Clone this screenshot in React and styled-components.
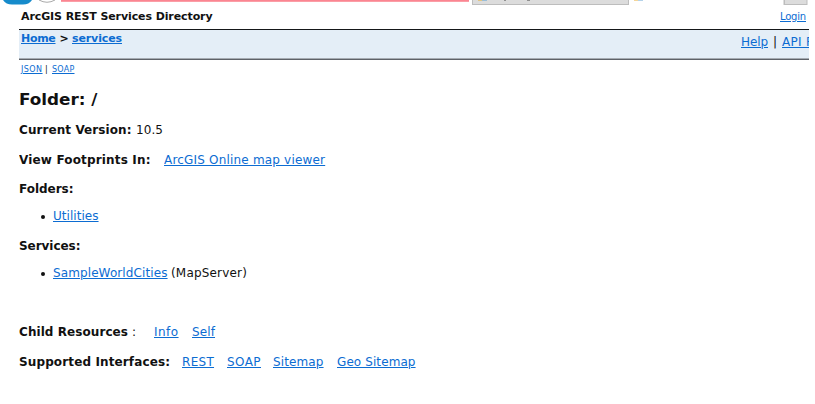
import React from 'react';
import styled, { createGlobalStyle, css } from 'styled-components';

const Global = createGlobalStyle`
  body { margin: 0; background: #fff; overflow: hidden; }
`;

const Page = styled.div`
  box-sizing: border-box;
  width: 815px;
  height: 404px;
  overflow: hidden;
  padding-right: 6px;
  font-family: "DejaVu Sans", Verdana, sans-serif;
  font-size: 11.5px;
  color: #111;
`;

const BrowserEdge = styled.svg`
  display: block;
  width: 815px;
  height: 6px;
`;

const TitleBar = styled.header`
  display: flex;
  justify-content: space-between;
  height: 23px;
  margin-left: 19px;
  padding: 0 3px 0 2px;
  border-bottom: 1px solid #151719;
  line-height: 22px;
`;

const NavBar = styled.nav`
  display: flex;
  justify-content: space-between;
  height: 29px;
  margin-left: 19px;
  padding-left: 2px;
  overflow: hidden;
  background: #e4eef7;
  border-bottom: 1px solid #5e6268;
  box-shadow: inset 0 -1px #a5abb2;
`;

const Crumbs = styled.div`
  display: flex;
  line-height: 17px;
`;

const HelpLinks = styled.div`
  display: flex;
  width: 68px;
  overflow: hidden;
  line-height: 24px;
`;

const Formats = styled.div`
  display: flex;
  height: 20px;
  padding-left: 21px;
  line-height: 20px;
`;

const Row = styled.div`
  display: flex;
  height: 20px;
  margin-top: ${(p) => p.$top}px;
  padding-left: 19px;
  line-height: 20px;
`;

const Item = styled(Row)`
  padding-left: 41px;
`;

const Bullet = styled.span`
  flex: none;
  width: 4px;
  height: 4px;
  margin: 9px 0 0 -0.5px;
  border-radius: 50%;
  background: #111;
`;

const WIDEN = 12 / 11.5;

// Body text is set wide: the glyphs are stretched, the box keeps its $w.
const widened = css`
  width: ${(p) => p.$w / WIDEN}px;
  margin-right: ${(p) => p.$w - p.$w / WIDEN}px;
  transform: scaleX(${WIDEN});
  transform-origin: 0 50%;
`;

const Text = styled.span`
  flex: none;
  width: ${(p) => p.$w}px;
  margin-left: ${(p) => p.$gap || 0}px;
  font-size: ${(p) => p.$size || 11.5}px;
  font-weight: ${(p) => (p.$bold ? 700 : 400)};
  letter-spacing: ${(p) => p.$track || 0}px;
  white-space: nowrap;
  ${(p) => !p.$size && widened}
`;

const Heading = styled.h1`
  margin: 0;
  font-size: 16px;
  font-weight: 700;
  transform: scaleX(1.05);
  transform-origin: 0 50%;
`;

const TextLink = styled(Text).attrs({ as: 'a', href: '#' })`
  height: max-content;
  color: #0c6cd2;
  text-decoration: underline;
  text-decoration-thickness: 1px;
  text-underline-offset: 1px;
`;

export default function App() {
  return (
    <Page>
      <Global />
      <BrowserEdge viewBox="0 0 815 6">
        <path d="M3 0H32Q29 4.5 23 4.5H12Q6 4.5 3 0Z" fill="#168bcb" />
        <path d="M39 0Q47 4.5 55 0" fill="none" stroke="#aaa" />
        <rect x="61" width="408" height="1.8" fill="#fb8591" />
        <rect x="472" width="157" height="5" fill="#bdbdbd" />
        <rect x="473" width="155" height="4" fill="#dcdcdc" />
        <path d="M478 0h4" stroke="#e5bd62" strokeWidth="1.5" />
        <path d="M482 0h5" stroke="#86b4d6" strokeWidth="1.5" />
        <path d="M504 0h2M527 0h3" stroke="#777" strokeWidth="1.5" />
        <path d="M634 0h4" stroke="#f0c978" strokeWidth="1.5" />
        <path d="M638 0h5" stroke="#9bc3e2" strokeWidth="1.5" />
        <rect x="783.5" width="24" height="5" fill="#bdbdbd" />
        <rect x="785" width="21.5" height="4" fill="#dcdcdc" />
      </BrowserEdge>
      <TitleBar>
        <Text $bold $size={11} $w={192} $track={-0.097}>ArcGIS REST Services Directory</Text>
        <TextLink $size={10} $w={26} $track={-0.196}>Login</TextLink>
      </TitleBar>
      <NavBar>
        <Crumbs>
          <TextLink $bold $size={11} $w={34.5} $track={-0.296}>Home</TextLink>
          <Text $bold $size={11} $w={9} $gap={4}>&gt;</Text>
          <TextLink $bold $size={11} $w={50} $gap={3.5} $track={-0.113}>services</TextLink>
        </Crumbs>
        <HelpLinks>
          <TextLink $w={27} $track={-0.08}>Help</TextLink>
          <Text $w={4} $gap={5}>|</Text>
          <TextLink $w={30} $gap={5.5} $track={0.3}>API R</TextLink>
        </HelpLinks>
      </NavBar>
      <Formats>
        <TextLink $size={8} $w={21.5} $track={0.45}>JSON</TextLink>
        <Text $size={8} $w={3} $gap={2.5}>|</Text>
        <TextLink $size={8} $w={22.5} $gap={4} $track={0.242}>SOAP</TextLink>
      </Formats>
      <Row $top={10}>
        <Heading>Folder: /</Heading>
      </Row>
      <Row $top={10}>
        <Text $bold $w={112.5} $track={0.072}>Current Version:</Text>
        <Text $w={28} $gap={4.5} $track={0.07}>10.5</Text>
      </Row>
      <Row $top={10}>
        <Text $bold $w={131.5} $track={0.155}>View Footprints In:</Text>
        <TextLink $w={161.5} $gap={13.5} $track={0.18}>ArcGIS Online map viewer</TextLink>
      </Row>
      <Row $top={9}>
        <Text $bold $w={55} $track={-0.02}>Folders:</Text>
      </Row>
      <Item $top={7}>
        <Bullet />
        <TextLink $w={45.5} $gap={8} $track={0.04}>Utilities</TextLink>
      </Item>
      <Row $top={10}>
        <Text $bold $w={62} $track={-0.04}>Services:</Text>
      </Row>
      <Item $top={7}>
        <Bullet />
        <TextLink $w={114.5} $gap={8} $track={0.1}>SampleWorldCities</TextLink>
        <Text $w={77} $gap={4.5} $track={0.17}>(MapServer)</Text>
      </Item>
      <Row $top={39}>
        <Text $bold $w={109} $track={0.067}>Child Resources</Text>
        <Text $w={4} $gap={4.5}>:</Text>
        <TextLink $w={24.5} $gap={18} $track={0.44}>Info</TextLink>
        <TextLink $w={23} $gap={13} $track={0.11}>Self</TextLink>
      </Row>
      <Row $top={10}>
        <Text $bold $w={151} $track={0.12}>Supported Interfaces:</Text>
        <TextLink $w={32} $gap={12} $track={0.28}>REST</TextLink>
        <TextLink $w={34} $gap={13} $track={0.41}>SOAP</TextLink>
        <TextLink $w={50.5} $gap={12.5} $track={0.12}>Sitemap</TextLink>
        <TextLink $w={78.5} $gap={13} $track={0.09}>Geo Sitemap</TextLink>
      </Row>
    </Page>
  );
}
